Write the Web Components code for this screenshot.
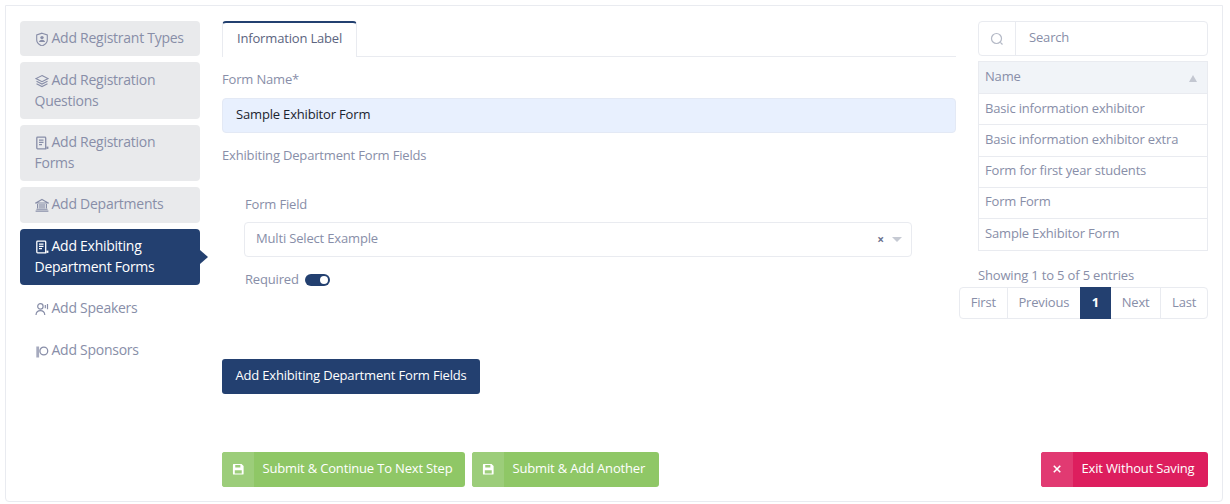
<!DOCTYPE html>
<html>
<head>
<meta charset="utf-8">
<title>Exhibiting Department Forms</title>
<style>
  html, body { margin: 0; padding: 0; background: #fff; }
  body { font-family: "Open Sans", "Liberation Sans", sans-serif; font-size: 13px; letter-spacing: -0.17px; color: #888ea8; }
</style>
</head>
<body>
<wizard-page>
  <side-nav slot="nav">
    <nav-item icon="shield" state="done">Add Registrant Types</nav-item>
    <nav-item icon="layers" state="done">Add Registration Questions</nav-item>
    <nav-item icon="form" state="done">Add Registration Forms</nav-item>
    <nav-item icon="bank" state="done">Add Departments</nav-item>
    <nav-item icon="form" state="active">Add Exhibiting Department Forms</nav-item>
    <nav-item icon="speaker">Add Speakers</nav-item>
    <nav-item icon="sponsor">Add Sponsors</nav-item>
  </side-nav>

  <exhibitor-form slot="main"></exhibitor-form>

  <forms-list slot="aside"></forms-list>

  <div slot="footer-left" style="display:flex;gap:7px">
    <split-button color="green" icon="save" style="width:243px">Submit &amp; Continue To Next Step</split-button>
    <split-button color="green" icon="save" style="width:187px">Submit &amp; Add Another</split-button>
  </div>
  <split-button slot="footer-right" color="red" icon="close" style="width:167px">Exit Without Saving</split-button>
</wizard-page>

<script>
const ICONS = {
  shield: '<path d="M7 1.2 12.3 3v5c0 2.8-2.2 4.7-5.3 6-3.100-1.300-5.300-3.200-5.300-6V3z" fill="none" stroke="currentColor" stroke-width="1.100"/><circle cx="7" cy="5.600" r="1.700" fill="currentColor"/><path d="M3.900 10c.5-1.500 1.700-2.200 3.100-2.200s2.600.7 3.100 2.200z" fill="currentColor"/>',
  layers: '<path d="M7 1.500 13 4.600 7 7.700 1 4.600z" fill="none" stroke="currentColor" stroke-width="1.100"/><path d="M1.500 7.300 7 10.100l5.500-2.800M1.500 9.800 7 12.600l5.500-2.800" fill="none" stroke="currentColor" stroke-width="1.100"/>',
  form: '<path d="M10.700 12.800H2.600a.8.8 0 0 1-.8-.8V2a.8.8 0 0 1 .8-.8h7.300a.8.8 0 0 1 .8.8z" fill="none" stroke="currentColor" stroke-width="1.300"/><path d="M4 4.200h4.500M4 6.400h4.500M4 8.600h3" stroke="currentColor" stroke-width="1.200"/><path d="M11.400 10.600h2v2.300h-2z" fill="currentColor"/>',
  bank: '<path d="M7 1.500 13.200 5H.8z" fill="none" stroke="currentColor" stroke-width="1.100"/><path d="M2.600 6v4.500M5 6v4.500M7 6v4.500M9 6v4.500M11.400 6v4.500" stroke="currentColor" stroke-width="1.200"/><path d="M1.400 11.300h11.200M.6 13.100h12.800" stroke="currentColor" stroke-width="1.100"/>',
  speaker: '<circle cx="5.400" cy="4.400" r="2.700" fill="none" stroke="currentColor" stroke-width="1.200"/><path d="M1 13c.2-2.700 2-4.300 4.400-4.300S9.600 10.300 9.800 13" fill="none" stroke="currentColor" stroke-width="1.200"/><path d="M10.300 3v3.200M12.500 2v5.200" stroke="currentColor" stroke-width="1.200"/>',
  sponsor: '<path d="M1.300 2.500h2.800v11H1.300z" fill="currentColor" opacity=".75"/><circle cx="8.800" cy="7" r="3.900" fill="none" stroke="currentColor" stroke-width="1.300"/>',
  save: '<path d="M1.500 1h8.800L12.500 3.200v8.300a1 1 0 0 1-1 1h-9.500a1 1 0 0 1-1-1V2a1 1 0 0 1 .5-1z" fill="currentColor"/><path d="M3.500 2.200h5.500v2.600H3.500z" fill="#9ccd7a"/><path d="M3 7.800h7.500v3.500H3z" fill="#9ccd7a"/>',
  close: '<path d="M3 3l7 7M10 3l-7 7" stroke="currentColor" stroke-width="1.700" fill="none"/>'
};

class WizardPage extends HTMLElement {
  constructor() {
    super();
    this.attachShadow({ mode: 'open' });
    this.shadowRoot.innerHTML = `
    <style>
      :host { display: block; padding: 5px 7px 0 5px; box-sizing: border-box; width: 1230px; height: 504px; }
      .panel {
        box-sizing: border-box; height: 497px;
        border: 1px solid #e9ebf0; border-radius: 0 0 4px 4px;
        padding: 15px 14px 14px 14px;
        display: flex; flex-direction: column; justify-content: space-between;
      }
      .top { display: grid; grid-template-columns: 180px 734px 230px; column-gap: 22px; }
      .foot { display: flex; justify-content: space-between; padding-left: 202px; }
    </style>
    <div class="panel">
      <div class="top">
        <slot name="nav"></slot>
        <slot name="main"></slot>
        <slot name="aside"></slot>
      </div>
      <div class="foot">
        <slot name="footer-left"></slot>
        <slot name="footer-right"></slot>
      </div>
    </div>`;
  }
}

class SideNav extends HTMLElement {
  constructor() {
    super();
    this.attachShadow({ mode: 'open' });
    this.shadowRoot.innerHTML = `
    <style>
      :host { display: flex; flex-direction: column; gap: 6.2px; }
    </style>
    <slot></slot>`;
  }
}

class NavItem extends HTMLElement {
  constructor() {
    super();
    this.attachShadow({ mode: 'open' });
  }

  connectedCallback() {
    const icon = ICONS[this.getAttribute('icon')] || '';
    this.shadowRoot.innerHTML = `
    <style>
      :host {
        display: block; position: relative; box-sizing: border-box;
        padding: 6.1px 14px 8.15px 14.5px; border-radius: 4px;
        font-size: 14px; line-height: 21px; letter-spacing: -0.26px; color: #888ea8;
      }
      :host([state="done"]) { background: #e9eaec; }
      :host([state="active"]) { background: #234070; color: #fff; }
      :host([state="active"])::after {
        content: ""; position: absolute; left: 100%; top: 50%; margin-top: -7px;
        border-left: 8px solid #234070; border-top: 7px solid transparent; border-bottom: 7px solid transparent;
      }
      svg { width: 14px; height: 14px; vertical-align: -3px; margin-right: 3px; }
    </style>
    <svg viewBox="0 0 14 14">${icon}</svg><slot></slot>`;
  }
}

class TabBar extends HTMLElement {
  constructor() {
    super();
    this.attachShadow({ mode: 'open' });
    this.shadowRoot.innerHTML = `
    <style>
      :host { display: flex; border-bottom: 1px solid #e9ebf0; height: 36px; box-sizing: border-box; }
      .tab {
        box-sizing: border-box; width: 135px; height: 36px; padding: 5px 0 0 14px;
        border: 1px solid #e9ebf0; border-top: 2px solid #234070; border-bottom: 0;
        border-radius: 4px 4px 0 0; background: #fff;
        font-size: 13px; line-height: 20px; color: #5c6480;
      }
    </style>
    <div class="tab"><slot></slot></div>`;
  }
}

class ToggleSwitch extends HTMLElement {
  constructor() {
    super();
    this.attachShadow({ mode: 'open' });
    this.shadowRoot.innerHTML = `
    <style>
      :host { display: inline-block; position: relative; width: 25px; height: 12px; margin-top: 2px; border-radius: 6px; background: #234070; }
      i { position: absolute; right: 2px; top: 2px; width: 8px; height: 8px; border-radius: 50%; background: #fff; }
    </style>
    <i></i>`;
  }
}

class MultiSelect extends HTMLElement {
  constructor() {
    super();
    this.attachShadow({ mode: 'open' });
    this.shadowRoot.innerHTML = `
    <style>
      :host {
        display: flex; align-items: center; box-sizing: border-box; height: 35px;
        border: 1px solid #e9ebf0; border-radius: 4px; padding: 0 9px 3px 11px;
        font-size: 13px; color: #888ea8;
      }
      .val { flex: 1; }
      .clear { font-size: 12px; font-weight: 700; color: #6c7390; margin: 3px 8px 0 0; line-height: 12px; }
      .arrow { width: 0; height: 0; margin-top: 3px; border-left: 5px solid transparent; border-right: 5px solid transparent; border-top: 5px solid #c6cad3; }
    </style>
    <span class="val"><slot></slot></span><span class="clear">×</span><span class="arrow"></span>`;
  }
}

class ExhibitorForm extends HTMLElement {
  constructor() {
    super();
    this.attachShadow({ mode: 'open' });
    this.shadowRoot.innerHTML = `
    <style>
      :host { display: block; font-size: 13px; color: #888ea8; line-height: 18px; }
      .name-label { margin-top: 13px; }
      .name {
        margin-top: 10px; height: 35px; box-sizing: border-box; padding: 0 13px 3px;
        display: flex; align-items: center; background: #e8f0fe;
        border: 1px solid #e3e9f5; border-radius: 4px; color: #1b2430; font-size: 13px;
      }
      .sub { margin-top: 13px; }
      .group { padding: 31px 44px 0 22px; }
      .field-label { margin-left: 1px; }
      multi-select { margin-top: 9px; }
      .req { margin-top: 13px; margin-left: 1px; display: flex; align-items: center; gap: 6px; }
      .add {
        margin-top: 71px; width: 258px; height: 35px; box-sizing: border-box; padding-bottom: 3px;
        display: flex; align-items: center; justify-content: center;
        background: #234070; color: #fff; border-radius: 3px; font-size: 13px;
      }
    </style>
    <tab-bar>Information Label</tab-bar>
    <div class="name-label">Form Name*</div>
    <div class="name">Sample Exhibitor Form</div>
    <div class="sub">Exhibiting Department Form Fields</div>
    <div class="group">
      <div class="field-label">Form Field</div>
      <multi-select>Multi Select Example</multi-select>
      <div class="req">Required <toggle-switch></toggle-switch></div>
    </div>
    <div class="add">Add Exhibiting Department Form Fields</div>`;
  }
}

class FormsList extends HTMLElement {
  constructor() {
    super();
    this.attachShadow({ mode: 'open' });
    const rows = ['Basic information exhibitor', 'Basic information exhibitor extra', 'Form for first year students', 'Form Form', 'Sample Exhibitor Form'];
    const pages = ['First', 'Previous', '1', 'Next', 'Last'];
    this.shadowRoot.innerHTML = `
    <style>
      :host { display: block; position: relative; font-size: 13px; color: #888ea8; }
      .search {
        display: flex; height: 35px; box-sizing: border-box;
        border: 1px solid #e9ebf0; border-radius: 4px;
      }
      .search .ic { width: 36px; border-right: 1px solid #e9ebf0; display: flex; align-items: center; justify-content: center; color: #b4b9c6; }
      .search .ph { padding-left: 13px; line-height: 30px; }
      .table { margin-top: 5px; border: 1px solid #e9ebf0; border-bottom-width: 1px; }
      .head {
        display: flex; justify-content: space-between; align-items: center; box-sizing: border-box;
        height: 32px; padding: 0 10px 4px 6px; background: #f1f4f8; border-bottom: 1px solid #e9ebf0;
      }
      .head i { width: 0; height: 0; margin-top: 5px; border-left: 4px solid transparent; border-right: 4px solid transparent; border-bottom: 7px solid #c3c7d1; }
      .row { height: 31.25px; box-sizing: border-box; padding: 0 6px 3px; display: flex; align-items: center; border-bottom: 1px solid #e9ebf0; }
      .row:last-child { border-bottom: 0; }
      .info { margin-top: 15px; line-height: 18px; }
      .pager {
        margin: 3px 0 0 -19px; display: flex; height: 32px; box-sizing: border-box;
        border: 1px solid #e9ebf0; border-radius: 4px;
      }
      .pager span { display: flex; align-items: center; justify-content: center; border-left: 1px solid #e9ebf0; box-sizing: border-box; padding-bottom: 3px; }
      .pager span:first-child { border-left: 0; }
      .pager .on { background: #234070; color: #fff; font-weight: 700; border-left: 0; margin: -1px 0; padding-bottom: 2px; }
      .pager .after { border-left: 0; }
    </style>
    <div class="search">
      <div class="ic"><svg width="14" height="14" viewBox="0 0 14 14"><circle cx="6.500" cy="6.500" r="5" fill="none" stroke="currentColor" stroke-width="1.200"/><path d="M10.300 10.300 12.500 12.500" stroke="currentColor" stroke-width="1.200"/></svg></div>
      <div class="ph">Search</div>
    </div>
    <div class="table">
      <div class="head">Name<i></i></div>
      ${rows.map(r => `<div class="row">${r}</div>`).join('')}
    </div>
    <div class="info">Showing 1 to 5 of 5 entries</div>
    <div class="pager">
      ${pages.map((p, i) => {
        const w = [47, 74, 31, 50, 47][i];
        const cls = p === '1' ? 'on' : (p === 'Next' ? 'after' : '');
        return `<span class="${cls}" style="width:${w}px">${p}</span>`;
      }).join('')}
    </div>`;
  }
}

class SplitButton extends HTMLElement {
  constructor() {
    super();
    this.attachShadow({ mode: 'open' });
  }

  connectedCallback() {
    const icon = ICONS[this.getAttribute('icon')] || '';
    this.shadowRoot.innerHTML = `
    <style>
      :host { display: flex; height: 35px; border-radius: 3px; overflow: hidden; color: #fff; font-size: 13px; box-sizing: border-box; }
      :host([color="green"]) { background: #8fc766; }
      :host([color="green"]) .ic { background: #9ccd7a; }
      :host([color="red"]) { background: #dd1e5e; }
      :host([color="red"]) .ic { background: #e13a72; }
      .ic { flex: 0 0 32px; display: flex; align-items: center; justify-content: center; }
      .txt { flex: 1; display: flex; align-items: center; padding: 0 0 4px 8.5px; }
      svg { width: 13px; height: 13px; }
    </style>
    <span class="ic"><svg viewBox="0 0 14 14">${icon}</svg></span>
    <span class="txt"><slot></slot></span>`;
  }
}

customElements.define('wizard-page', WizardPage);
customElements.define('side-nav', SideNav);
customElements.define('nav-item', NavItem);
customElements.define('tab-bar', TabBar);
customElements.define('toggle-switch', ToggleSwitch);
customElements.define('multi-select', MultiSelect);
customElements.define('exhibitor-form', ExhibitorForm);
customElements.define('forms-list', FormsList);
customElements.define('split-button', SplitButton);
</script>
</body>
</html>
